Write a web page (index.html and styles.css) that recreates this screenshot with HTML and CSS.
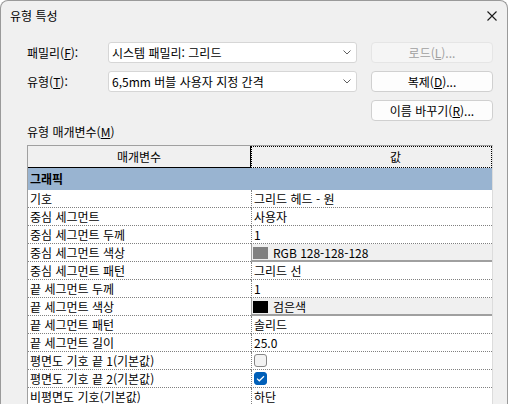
FILE: index.html
```html
<!DOCTYPE html>
<html lang="ko">
<head>
<meta charset="utf-8">
<title>유형 특성</title>
<link rel="stylesheet" href="styles.css">
</head>
<body>
<div class="window">
  <div class="titlebar">
    <span class="title">유형 특성</span>
    <svg class="close" width="10" height="10" viewBox="0 0 10 10"><path d="M0.5 0.5L9.5 9.5M9.5 0.5L0.5 9.5" stroke="#1a1a1a" stroke-width="1.1" fill="none"/></svg>
  </div>
  <div class="content">
    <div class="form">
      <span class="lbl">패밀리(<u>F</u>):</span>
      <div class="combo"><span>시스템 패밀리: 그리드</span><svg width="8" height="5" viewBox="0 0 8 5"><path d="M0.5 0.5L4 4L7.5 0.5" stroke="#606060" stroke-width="1" fill="none"/></svg></div>
      <button class="btn disabled">로드(<u>L</u>)...</button>
      <span class="lbl">유형(<u>T</u>):</span>
      <div class="combo"><span>6,5mm 버블 사용자 지정 간격</span><svg width="8" height="5" viewBox="0 0 8 5"><path d="M0.5 0.5L4 4L7.5 0.5" stroke="#606060" stroke-width="1" fill="none"/></svg></div>
      <button class="btn">복제(<u>D</u>)...</button>
      <span></span>
      <span></span>
      <button class="btn">이름 바꾸기(<u>R</u>)...</button>
    </div>
    <div class="section-label">유형 매개변수(<u>M</u>)</div>
    <div class="table">
      <div class="head">
        <div class="hcell first">매개변수</div>
        <div class="hcell second">값</div>
      </div>
      <div class="group">그래픽</div>
      <div class="row"><div class="name">기호</div><div class="val">그리드 헤드 - 원</div></div>
      <div class="row"><div class="name">중심 세그먼트</div><div class="val">사용자</div></div>
      <div class="row"><div class="name">중심 세그먼트 두께</div><div class="val">1</div></div>
      <div class="row"><div class="name">중심 세그먼트 색상</div><div class="val color"><span class="swatch gray"></span>RGB 128-128-128</div></div>
      <div class="row"><div class="name">중심 세그먼트 패턴</div><div class="val">그리드 선</div></div>
      <div class="row"><div class="name">끝 세그먼트 두께</div><div class="val">1</div></div>
      <div class="row"><div class="name">끝 세그먼트 색상</div><div class="val color"><span class="swatch black"></span>검은색</div></div>
      <div class="row"><div class="name">끝 세그먼트 패턴</div><div class="val">솔리드</div></div>
      <div class="row"><div class="name">끝 세그먼트 길이</div><div class="val">25.0</div></div>
      <div class="row"><div class="name">평면도 기호 끝 1(기본값)</div><div class="val"><span class="check"></span></div></div>
      <div class="row"><div class="name">평면도 기호 끝 2(기본값)</div><div class="val"><span class="check on"><svg width="9" height="7" viewBox="0 0 9 7"><path d="M1 3.6L3.3 5.8L8 1.2" stroke="#fff" stroke-width="1.2" fill="none"/></svg></span></div></div>
      <div class="row"><div class="name">비평면도 기호(기본값)</div><div class="val">하단</div></div>
    </div>
  </div>
</div>
</body>
</html>
```
FILE: styles.css
```css
* { box-sizing: border-box; }
body {
  margin: 0;
  background: #ffffff;
  font-family: "Noto Sans CJK KR", "Noto Sans", sans-serif;
  font-size: 12px;
  color: #000;
}
.window {
  width: 508px;
  height: 404px;
  border: 1px solid #9a9a9a;
  border-bottom: none;
  border-radius: 8px 8px 0 0;
  background: #f0f0f0;
  overflow: hidden;
}
.titlebar {
  height: 30px;
  display: flex;
  align-items: center;
  justify-content: space-between;
  padding: 0 10px 0 9px;
}
.title { line-height: 16px; }
.content { padding: 11px 0 0 26px; }
.form {
  display: grid;
  grid-template-columns: 67px 249px 122px;
  grid-auto-rows: 21px;
  column-gap: 14px;
  row-gap: 8px;
  align-items: center;
}
.lbl { line-height: 16px; white-space: nowrap; }
.combo {
  height: 21px;
  background: #fff;
  border: 1px solid #d6d6d6;
  border-radius: 3px;
  display: flex;
  align-items: center;
  justify-content: space-between;
  padding: 0 5px 0 3px;
  line-height: 16px;
}
.btn {
  height: 21px;
  border: 1px solid #d0d0d0;
  border-radius: 4px;
  background: #fdfdfd;
  font: inherit;
  color: #000;
  padding: 0;
  line-height: 16px;
}
.btn.disabled {
  color: #a0a0a0;
  background: #f5f5f5;
  border-color: #e5e5e5;
}
.section-label {
  margin: 3px 0 5px;
  line-height: 16px;
}
.table {
  width: 466px;
  border-top: 1px solid #a0a0a0;
  border-left: 1px solid #a0a0a0;
  border-right: 1px solid #dcdcdc;
  background: #fff;
}
.head {
  display: grid;
  grid-template-columns: 223px 1fr;
  height: 22px;
  background: #f0f0f0;
}
.hcell {
  display: flex;
  align-items: center;
  justify-content: center;
  line-height: 16px;
}
.hcell.first {
  border-right: 1px solid #000;
  border-bottom: 1px solid #000;
}
.hcell.second {
  border: 1px dotted #000;
  padding-left: 48px;
}
.group {
  height: 22px;
  background: #99b4d1;
  font-weight: bold;
  padding-left: 2px;
  line-height: 22px;
}
.row {
  display: grid;
  grid-template-columns: 223px 1fr;
  height: 18px;
}
.name, .val {
  border-bottom: 1px dotted #808080;
  padding-left: 2px;
  line-height: 17px;
  white-space: nowrap;
  overflow: hidden;
}
.val {
  border-left: 1px dotted #808080;
  display: flex;
  align-items: center;
}
.val.color {
  background: #f0f0f0;
  border-left: 1px solid #a0a0a0;
  border-bottom: 1px solid #a0a0a0;
  box-shadow: inset 0 -1px 0 #a0a0a0;
  padding-left: 1px;
}
.swatch {
  width: 15px;
  height: 12px;
  margin-right: 5px;
}
.swatch.gray { background: #808080; }
.swatch.black { background: #000; }
.check {
  width: 13px;
  height: 13px;
  border: 1px solid #868686;
  border-radius: 3px;
  background: #f3f3f3;
  display: flex;
  align-items: center;
  justify-content: center;
}
.check.on {
  background: #005fb8;
  border-color: #005fb8;
}
```
